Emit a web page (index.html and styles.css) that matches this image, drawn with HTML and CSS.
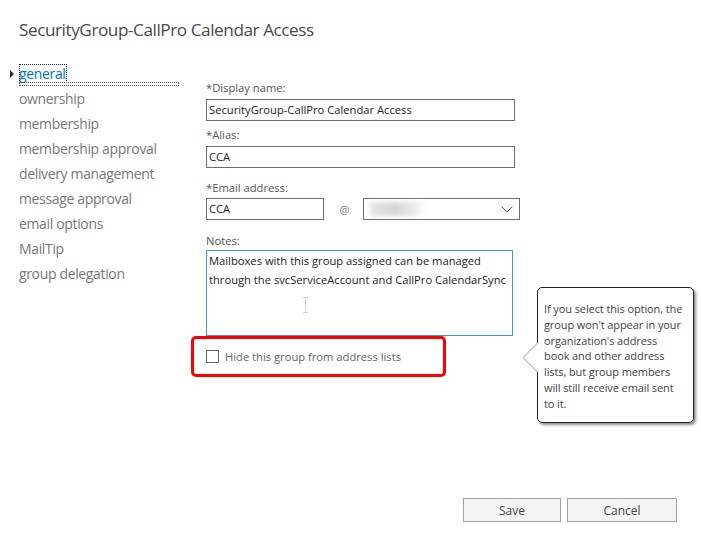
FILE: index.html
```html
<!DOCTYPE html>
<html>
<head>
<meta charset="utf-8">
<link rel="stylesheet" href="styles.css">
</head>
<body>
<div class="page">
  <h1 class="title">SecurityGroup-CallPro Calendar Access</h1>
  <div class="main">
    <nav class="nav">
      <div class="nav-item active"><span class="arrow"></span><a class="focus">general</a><span class="focus-bar"></span></div>
      <div class="nav-item">ownership</div>
      <div class="nav-item">membership</div>
      <div class="nav-item">membership approval</div>
      <div class="nav-item">delivery management</div>
      <div class="nav-item">message approval</div>
      <div class="nav-item">email options</div>
      <div class="nav-item">MailTip</div>
      <div class="nav-item">group delegation</div>
    </nav>
    <section class="form">
      <label class="lbl lbl-first">*Display name:</label>
      <div class="input wide">SecurityGroup-CallPro Calendar Access</div>
      <label class="lbl lbl-alias">*Alias:</label>
      <div class="input wide">CCA</div>
      <label class="lbl lbl-email">*Email address:</label>
      <div class="email-row">
        <div class="input short">CCA</div>
        <span class="at">@</span>
        <div class="input select"><span class="blur"></span>
          <svg class="chev" width="12" height="7" viewBox="0 0 12 7"><path d="M0.5 0.5 L6 6 L11.5 0.5" fill="none" stroke="#555" stroke-width="1"/></svg>
        </div>
      </div>
      <label class="lbl lbl-notes">Notes:</label>
      <div class="textarea">Mailboxes with this group assigned can be managed through the svcServiceAccount and CallPro CalendarSync
        <span class="ibeam"></span>
      </div>
      <div class="check-row">
        <span class="checkbox"></span>
        <span class="check-label">Hide this group from address lists</span>
        <span class="highlight"></span>
      </div>
    </section>
  </div>
  <div class="tip">
    <svg class="tip-arrow" width="17" height="32" viewBox="0 0 17 32"><path d="M16 0.5 L1 15.5 L16 30.5" fill="#fff" stroke="#9a9a9a" stroke-width="1"/><rect x="15.5" y="1" width="2" height="29" fill="#fff"/></svg>
    <p class="tip-text">If you select this option, the<br>group won't appear in your<br>organization's address<br>book and other address<br>lists, but group members<br>will still receive email sent<br>to it.</p>
  </div>
  <footer class="footer">
    <button class="btn save">Save</button>
    <button class="btn cancel">Cancel</button>
  </footer>
</div>
</body>
</html>
```
FILE: styles.css
```css
* { box-sizing: border-box; }
html, body { margin: 0; padding: 0; background: #fff; }
body { font-family: "Open Sans", "Noto Sans", sans-serif; color: #333; }
.page { position: relative; width: 701px; height: 533px; display: flex; flex-direction: column; }
.title { margin: 0; padding: 17px 0 0 19px; font-size: 17.2px; font-weight: 400; color: #4a4a4a; line-height: 26px; letter-spacing: -0.45px; }
.main { display: flex; margin-top: 18px; }
.nav { width: 206px; padding-left: 19px; flex-shrink: 0; }
.nav-item { height: 25px; line-height: 25px; font-size: 14px; color: #777; letter-spacing: -0.35px; position: relative; white-space: nowrap; }
.nav-item.active { color: #0072c6; }
.arrow { position: absolute; left: -9px; top: 9px; width: 0; height: 0; border-top: 4px solid transparent; border-bottom: 4px solid transparent; border-left: 4px solid #333; }
.focus { outline: 1px dotted #222; outline-offset: -1px; display: inline-block; line-height: 19px; padding-right: 1px; }
.focus-bar { position: absolute; left: 0; top: 21px; width: 160px; height: 4px; border: 1px dotted #555; }
.form { display: flex; flex-direction: column; align-items: flex-start; font-size: 11.2px; padding-top: 20px; }
.lbl { display: block; line-height: 18px; color: #555; }
.lbl-first { margin-top: -2px; }
.lbl-alias { margin-top: 5px; }
.lbl-email { margin-top: 11px; }
.lbl-notes { margin-top: 12px; }
.input { height: 22px; border: 1px solid #6d6d6d; line-height: 20px; padding-left: 2px; color: #222; background: #fff; margin-top: 2px; }
.wide { width: 309px; }
.email-row { display: flex; align-items: center; margin-top: 1px; }
.email-row .input { margin-top: 0; }
.short { width: 118px; }
.at { width: 39px; text-align: center; color: #777; font-size: 11px; padding-left: 2px; }
.select { width: 157px; position: relative; }
.blur { position: absolute; left: 6px; top: 3px; width: 56px; height: 14px; background: linear-gradient(90deg, #e6e6e6, #d6d6d6 45%, #ececec 80%, #fff); filter: blur(2px); }
.chev { position: absolute; right: 6px; top: 7px; }
.textarea { position: relative; width: 307px; height: 86px; border: 1px solid #3c9bd3; margin-top: 0; padding: 0 2px; line-height: 19px; color: #222; }
.ibeam { position: absolute; left: 96px; top: 46px; width: 5px; height: 14px; }
.ibeam::before { content: ""; position: absolute; left: 2px; top: 0; width: 1px; height: 14px; background: #d4d4d4; }
.ibeam::after { content: ""; position: absolute; left: 0; top: 0; width: 5px; height: 14px; border-top: 1px solid #d4d4d4; border-bottom: 1px solid #d4d4d4; }
.check-row { position: relative; display: flex; align-items: center; margin-top: 13px; height: 14px; }
.checkbox { width: 13px; height: 13px; border: 1px solid #666; background: #fff; }
.check-label { margin-left: 6px; color: #666; font-size: 11.2px; }
.highlight { position: absolute; left: -15px; top: -13px; width: 255px; height: 41px; border: 3px solid #f00; border-radius: 5px; }
.tip { position: absolute; left: 537px; top: 287px; width: 157px; height: 136px; border: 1px solid #222; border-radius: 5px; background: #fff; box-shadow: 2px 2px 3px rgba(0,0,0,0.45); padding: 13px 2px 0 6px; color: #444; }
.tip-text { margin: 0; font-size: 11px; line-height: 15.8px; white-space: nowrap; letter-spacing: -0.1px; }
.tip-arrow { position: absolute; left: -16px; top: 54px; }
.footer { margin-top: auto; display: flex; justify-content: flex-end; gap: 6px; padding: 0 24px 11px 0; }
.btn { font-family: inherit; font-size: 12px; color: #444; background: #f4f4f4; border: 1px solid #a0a0a0; height: 24px; padding: 0; }
.save { width: 98px; }
.cancel { width: 110px; }
```
